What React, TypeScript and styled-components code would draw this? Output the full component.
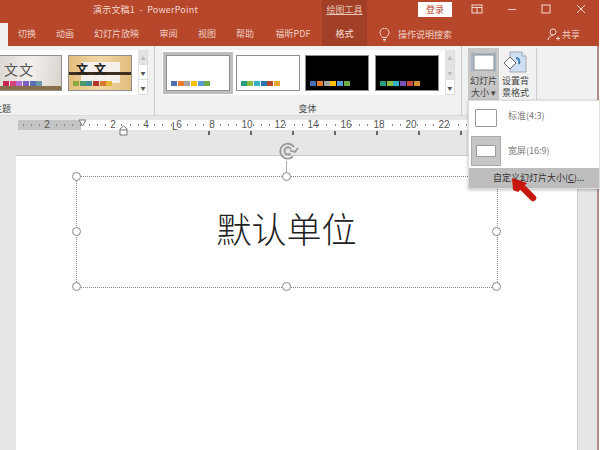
import React from "react";
import styled, { createGlobalStyle } from "styled-components";

const Global = createGlobalStyle`
  html, body { margin: 0; padding: 0; width: 600px; height: 450px; overflow: hidden; background: #e6e6e6; }
  * { box-sizing: border-box; }
`;
const FONT = `"Noto Sans CJK SC", "Liberation Sans", sans-serif`;

const Page = styled.div`
  position: relative; width: 600px; height: 450px; overflow: hidden;
  font-family: ${FONT}; background: #e6e6e6; color: #444;
`;
const TitleBar = styled.div`
  display: flex; align-items: flex-start; height: 23px; padding-left: 93px; background: #b7472a; color: #f3d9d0; font-size: 9px;
`;
const TitleText = styled.span`
  flex: none; width: 229px; padding-top: 2px; line-height: 16px; white-space: pre; letter-spacing: 0.2px;
`;
const ToolContext = styled.div`
  flex: none; width: 45px; height: 23px; background: #a23f27;
  text-align: center; line-height: 19px; font-size: 9px; color: #eac6ba; text-decoration: underline;
`;
const Login = styled.div`
  flex: none; margin: 2px 19px 0 51px; width: 34px; height: 15px; background: #fff; color: #b7472a;
  font-size: 9px; line-height: 15px; text-align: center;
`;
const WinControls = styled.div`display: flex; gap: 22.6px; padding-top: 3px;`;
const WinIcon = styled.svg`
  flex: none; width: 12px; height: 12px; fill: none; stroke: #f3d9d0; stroke-width: 1;
`;
const TabBar = styled.div`
  display: flex; align-items: center; height: 23px; background: #b7472a; color: #f0d0c6; font-size: 9px;
`;
const HomeStub = styled.div`width: 8px; height: 23px; background: #f1f1f1; flex: none;`;
const Tab = styled.div<{ $w: number; $active?: boolean }>`
  width: ${p => p.$w}px; height: 23px; line-height: 21px; text-align: center; flex: none;
  background: ${p => (p.$active ? "#a23f27" : "transparent")};
  color: ${p => (p.$active ? "#f7e3dc" : "#f0d0c6")};
`;
const Search = styled.div`
  display: flex; align-items: center; gap: 8px; margin-left: 12px; width: 168px; flex: none;
`;
const Share = styled.div`display: flex; align-items: center; gap: 2px; flex: none;`;
const Ribbon = styled.div`
  display: flex; height: 70px; background: #f1f1f1; border-bottom: 1px solid #dadada; font-size: 9px;
`;
const GroupA = styled.div`
  flex: none; width: 155px; height: 70px; display: flex; flex-direction: column; border-right: 1px solid #c9c9c9;
  margin-right: 7px; padding-top: 4px;
`;
const Gallery = styled.div`
  display: flex; align-items: center; gap: 6px; background: #fff; height: 45px; width: 147px; flex: none;
`;
const Swatches = styled.div<{ $l: number }>`
  display: flex; margin: auto 0 4px ${p => p.$l}px; position: relative;
`;
const Chip = styled.i<{ $c: string }>`display: block; width: 6px; height: 5px; margin-right: 0.7px; background: ${p => p.$c};`;
const Thumb = styled.div<{ $bg: string; $sel?: boolean }>`
  position: relative; flex: none; display: flex; flex-direction: column; width: 64px; height: 36px;
  border: 1px solid #8f8f8f; background: ${p => p.$bg};
  outline: ${p => (p.$sel ? "3px solid #bdbdbd" : "none")};
`;
const ThemeCrop = styled(Thumb)`width: 62px; border-left: none;`;
const ThemeLabel = styled.div`margin: 7px 0 0 -7px; line-height: 13px; color: #444; font-size: 9px; white-space: nowrap;`;
const Spin = styled.div`
  margin-left: auto; flex: none; width: 10px; height: 45px; display: flex; flex-direction: column;
  background: #fff; border-left: 1px solid #e2e2e2;
`;
const SpinBtn = styled.div<{ $dis?: boolean }>`
  flex: 1; display: flex; align-items: center; justify-content: center; font-size: 5px; line-height: 1;
  background: ${p => (p.$dis ? "#e3e3e3" : "#fff")}; color: ${p => (p.$dis ? "#bbb" : "#555")};
  border-bottom: 1px solid #ddd; border-right: 1px solid #ddd;
`;
const GroupB = styled.div`
  flex: none; width: 300px; height: 70px; display: flex; flex-direction: column; border-right: 1px solid #c9c9c9; margin-right: 6px; padding-top: 4px;
`;
const VariantRow = styled.div`
  display: flex; align-items: center; gap: 5.7px; background: #fff; height: 45px; width: 291px; padding-left: 4px; flex: none;
`;
const GroupLabel = styled.div`margin-top: 7px; padding-right: 8px; text-align: center; line-height: 13px; color: #444; font-size: 9px;`;
const BigBtn = styled.div<{ $on?: boolean }>`
  flex: none; width: 31px; height: 55px; margin-top: 2px; padding-top: 3px; display: flex; flex-direction: column; align-items: center;
  background: ${p => (p.$on ? "#c6c6c6" : "transparent")}; font-size: 9px; line-height: 12px; color: #444; text-align: center;
`;
const BgBtn = styled(BigBtn)`margin-left: 1px; margin-right: 5px;`;
const SizeLabel = styled.span`margin-top: 2px;`;
const BgLabel = styled.span`margin-top: 2px;`;
const RibbonEnd = styled.div`flex: none; width: 1px; height: 52px; margin-top: 2px; background: #cdcdcd;`;
const RulerBand = styled.div`
  height: 38px; background: #e6e6e6; padding: 4px 0 0 18px; flex: none;
`;
const Ruler = styled.div`
  position: relative; width: 490px; height: 10px; background: #fff;
`;
const RulerGrey = styled.div`position: absolute; left: 0; top: 0; width: 63px; height: 10px; background: #c4c4c4;`;
const RulerNum = styled.span<{ $x: number }>`
  position: absolute; left: ${p => p.$x}px; top: 0; width: 14px; margin-left: -7px; text-align: center;
  font: 10px/10px "Liberation Sans", sans-serif; color: #555;
`;
const RulerTick = styled.span<{ $x: number }>`
  position: absolute; left: ${p => p.$x}px; top: 4px; width: 1px; height: 2px; background: #888;
`;
const MajorRow = styled.div`display: flex; gap: 40px; margin-top: 1px; padding-left: 190px;`;
const MajorTick = styled.span`flex: none; width: 2px; height: 4px; background: #666;`;
const IndentTop = styled.svg`position: absolute; left: 60px; top: -1px;`;
const IndentBottom = styled.svg`position: absolute; left: 101px; top: 5px;`;
const TabStop = styled.span`position: absolute; left: 154px; top: 2px; font: 10px/10px "Liberation Sans", sans-serif; color: #444;`;
const Workspace = styled.div`
  height: 296px; padding: 1px 22px 0 16px; background: #e6e6e6;
`;
const Slide = styled.div`
  position: relative; width: 562px; height: 295px; background: #fff; border-top: 1px solid #c9c9c9; border-right: 1px solid #c9c9c9;
`;
const TextBox = styled.div`
  position: absolute; left: 60px; top: 20px; width: 422px; height: 112px; border: 1px dotted #8a8a8a;
  display: flex; align-items: center; justify-content: center; font-size: 35px; color: #222; padding: 0 1px 9px 0;
  font-family: "Noto Sans CJK SC", sans-serif; font-weight: 300;
`;
const Handle = styled.span<{ $x: string; $y: string }>`
  position: absolute; left: ${p => p.$x}; top: ${p => p.$y}; width: 9px; height: 9px; margin: -5px 0 0 -5px;
  border-radius: 50%; background: #fff; border: 1.3px solid #8a8a8a;
`;
const RotateStem = styled.span`position: absolute; left: 50%; top: -16px; width: 1px; height: 16px; background: #aaa; margin-left: -1px;`;
const RotateIcon = styled.svg`position: absolute; left: 202px; top: -35px; width: 20px; height: 18px;`;
const Menu = styled.div`
  position: absolute; left: 468px; top: 100px; width: 132px; height: 89px; background: #fff; border: 1px solid #dcdcdc;
  box-shadow: 0 1px 3px rgba(0,0,0,.25); font-size: 9px; color: #777; z-index: 5;
`;
const MenuRow = styled.div<{ $h: number }>`display: flex; align-items: flex-start; height: ${p => p.$h}px; padding-left: 2px; gap: 7px;`;
const MenuIconBox = styled.div<{ $on?: boolean }>`
  flex: none; width: 30px; height: 30px; margin-top: ${p => (p.$on ? 0 : 2)}px; display: flex; align-items: center; justify-content: center;
  background: ${p => (p.$on ? "#c6c6c6" : "transparent")}; border: ${p => (p.$on ? "1px solid #aaa" : "none")};
`;
const MenuLabel = styled.span`line-height: 30px;`;
const MenuSlide = styled.div`width: 22px; height: 18px; background: #fff; border: 1px solid #999; border-radius: 1px;`;
const MenuSlideWide = styled.div`width: 20px; height: 12px; background: #fff; border: 1px solid #999; border-radius: 1px;`;
const MenuCustom = styled.div`
  height: 20px; background: #bdbdbd; line-height: 19px; padding-left: 24px; color: #333; white-space: nowrap; font-size: 9px;
`;
const Underlined = styled.span`text-decoration: underline;`;
const Arrow = styled.svg`position: absolute; left: 510px; top: 176px; width: 28px; height: 28px; z-index: 6;`;
const EdgeLine = styled.div`position: absolute; left: 597px; top: 46px; bottom: 0; width: 2px; background: #ab8f88;`;
const EdgeWhite = styled.div`position: absolute; left: 599px; top: 0; bottom: 0; width: 1px; background: #fff;`;
const Glyph = styled.span`
  position: absolute; font-family: "Noto Sans CJK SC", serif; color: #333; line-height: 1;
`;
const ThemeGlyphA = styled(Glyph)`left: 4px; top: 6px; font-size: 14px; letter-spacing: 1px; color: #555;`;
const ThemeGlyphB = styled(Glyph)`left: 7px; top: 7px; font-size: 12px; letter-spacing: 6px; color: #222; font-weight: 700;`;
const ThemeCard = styled.div`position: absolute; left: 12px; top: 6px; width: 39px; height: 21px; background: #f5f1ea;`;
const ThemeBandDark = styled.div`position: absolute; left: 0; right: 0; top: 16px; height: 3px; background: #3f2f20;`;
const ThemeFloor = styled.div`position: absolute; left: 0; right: 0; bottom: 0; height: 4px; background: #8a6d4a;`;

const strip = (colors: string[], l: number) => (
  <Swatches $l={l}>{colors.map((c, i) => <Chip key={i} $c={c} />)}</Swatches>
);
const V1 = ["#4a6fb5", "#ed7d31", "#a5a5a5", "#ffc000", "#5b9bd5", "#70ad47"];
const V2 = ["#2a9d7f", "#8bbd3f", "#35b3c4", "#2a72b0", "#b5482a", "#eba52f"];
const V4 = ["#2a9d7f", "#8bbd3f", "#35b3c4", "#7a4fb5", "#c9483a", "#d9902f"];

const tabs: [string, number][] = [["切换", 38], ["动画", 38], ["幻灯片放映", 65], ["审阅", 39], ["视图", 38], ["帮助", 38], ["福昕PDF", 58]];
const nums: [number, string][] = [[29, "2"], [95, "2"], [128, "4"], [161, "6"], [194, "8"], [229, "10"], [262, "12"], [295, "14"], [328, "16"], [361, "18"], [393, "20"], [426, "22"]];
const ticks = Array.from({ length: 58 }, (_, i) => 5 + i * 8.2).filter(x => !nums.some(n => Math.abs(n[0] - x) < 5));
const majors = [0, 1, 2, 3, 4, 5, 6];

export default function App() {
  return (
    <Page>
      <Global />
      <TitleBar>
        <TitleText>{"演示文稿1  -  PowerPoint"}</TitleText>
        <ToolContext>绘图工具</ToolContext>
        <Login>登录</Login>
        <WinControls>
          <WinIcon viewBox="0 0 12 12"><rect x="1" y="2" width="10" height="8" /><path d="M1 4.500h10M6 4.500v5.500" /></WinIcon>
          <WinIcon viewBox="0 0 12 12"><path d="M2 6.500h8" /></WinIcon>
          <WinIcon viewBox="0 0 12 12"><rect x="2" y="2" width="8" height="8" /></WinIcon>
          <WinIcon viewBox="0 0 12 12"><path d="M2 2l8 8M10 2l-8 8" /></WinIcon>
        </WinControls>
      </TitleBar>
      <TabBar>
        <HomeStub />
        {tabs.map(([t, w]) => <Tab key={t} $w={w}>{t}</Tab>)}
        <Tab $w={45} $active>格式</Tab>
        <Search>
          <svg width="11" height="14" viewBox="0 0 11 14" fill="none" stroke="#f3d9d0" strokeWidth="1">
            <path d="M3.500 9.500C3 8 1 7 1 4.700a4.500 4.500 0 0 1 9 0C10 7 8 8 7.500 9.500zM4 11.500h3M4.500 13h2" />
          </svg>
          <span>操作说明搜索</span>
        </Search>
        <Share>
          <svg width="13" height="13" viewBox="0 0 13 13" fill="none" stroke="#f3d9d0" strokeWidth="1">
            <circle cx="6" cy="4" r="3" /><path d="M1 12c.5-3 2.500-4.500 5-4.500M9 10.500h4M11 8.500v4" />
          </svg>
          <span>共享</span>
        </Share>
      </TabBar>
      <Ribbon>
        <GroupA>
          <Gallery>
            <ThemeCrop $bg="linear-gradient(100deg,#dcd7d2,#f3efec 50%,#d8d2cc)">
              <ThemeGlyphA>文文</ThemeGlyphA>
              <ThemeFloor />
              {strip(["#c2254e", "#d9457a", "#b56bd6", "#7a5fc0", "#5b6fb5", "#6a9aa8"], 3)}
            </ThemeCrop>
            <Thumb $bg="linear-gradient(90deg,#e3bd7e,#f1d7a5 50%,#e3bd7e)">
              <ThemeCard />
              <ThemeBandDark />
              <ThemeGlyphB>文文</ThemeGlyphB>
              {strip(["#8aa83c", "#4a9a6a", "#3f8a96", "#b5342a", "#d9772f", "#e3b83f"], 4)}
            </Thumb>
            <Spin>
              <SpinBtn $dis>▲</SpinBtn>
              <SpinBtn>▼</SpinBtn>
              <SpinBtn>▼</SpinBtn>
            </Spin>
          </Gallery>
          <ThemeLabel>主题</ThemeLabel>
        </GroupA>
        <GroupB>
          <VariantRow>
            <Thumb $bg="#fff" $sel>{strip(V1, 4)}</Thumb>
            <Thumb $bg="#fff">{strip(V2, 4)}</Thumb>
            <Thumb $bg="#000">{strip(V1, 4)}</Thumb>
            <Thumb $bg="#000">{strip(V4, 4)}</Thumb>
            <Spin>
              <SpinBtn $dis>▲</SpinBtn>
              <SpinBtn $dis>▼</SpinBtn>
              <SpinBtn>▼</SpinBtn>
            </Spin>
          </VariantRow>
          <GroupLabel>变体</GroupLabel>
        </GroupB>
        <BigBtn $on>
          <svg width="25" height="22" viewBox="0 0 25 22" fill="none">
            <path d="M1 3h23" stroke="#8aa4bf" strokeWidth="1" />
            <path d="M1 1v20M24 1v20" stroke="#8aa4bf" strokeWidth="1" />
            <rect x="3" y="4" width="20" height="15" fill="#fff" stroke="#8a8a8a" />
          </svg>
          <SizeLabel>幻灯片<br />大小 ▾</SizeLabel>
        </BigBtn>
        <BgBtn>
          <svg width="25" height="22" viewBox="0 0 25 22" fill="none">
            <path d="M7 1h12l4 4v16H7z" fill="#cfe0f3" stroke="#9a9a9a" strokeWidth=".8" />
            <path d="M19 1v4h4" stroke="#9a9a9a" strokeWidth=".8" fill="#eef4fb" />
            <path d="M1 12l6-6 6 6-6 6z" fill="#fff" stroke="#666" strokeWidth="1" />
            <path d="M13 7c3 0 4 3 3 6" stroke="#3c7fb1" strokeWidth="2" />
          </svg>
          <BgLabel>设置背<br />景格式</BgLabel>
        </BgBtn>
        <RibbonEnd />
      </Ribbon>
      <RulerBand>
        <Ruler>
          <RulerGrey />
          {ticks.map(x => <RulerTick key={x} $x={x} />)}
          {nums.map(([x, n]) => <RulerNum key={x} $x={x}>{n}</RulerNum>)}
          <IndentTop width="9" height="8" viewBox="0 0 9 8"><path d="M1 1h7L4.500 7z" fill="#fff" stroke="#777" /></IndentTop>
          <IndentBottom width="9" height="11" viewBox="0 0 9 11"><path d="M1 4l3.500-3L8 4v6H1zM1 5h7" fill="#fff" stroke="#777" /></IndentBottom>
          <TabStop>L</TabStop>
        </Ruler>
        <MajorRow>{majors.map(x => <MajorTick key={x} />)}</MajorRow>
      </RulerBand>
      <Workspace>
        <Slide>
          <TextBox>
            默认单位
            <RotateStem />
            <RotateIcon viewBox="0 0 20 18" fill="none" stroke="#9a9a9a" strokeWidth="1.800">
              <path d="M14 14.500A7.500 7.500 0 1 1 15 5" />
              <path d="M11.500 11.500a3.600 3.600 0 1 1 .6-4.500" />
              <path d="M11 8.500l5 1.500 3-4" />
            </RotateIcon>
            <Handle $x="0" $y="0" /><Handle $x="50%" $y="0" /><Handle $x="100%" $y="0" />
            <Handle $x="0" $y="50%" /><Handle $x="100%" $y="50%" />
            <Handle $x="0" $y="100%" /><Handle $x="50%" $y="100%" /><Handle $x="100%" $y="100%" />
          </TextBox>
        </Slide>
      </Workspace>
      <EdgeLine />
      <EdgeWhite />
      <Menu>
        <MenuRow $h={35}><MenuIconBox><MenuSlide /></MenuIconBox><MenuLabel>标准(4:3)</MenuLabel></MenuRow>
        <MenuRow $h={32}><MenuIconBox $on><MenuSlideWide /></MenuIconBox><MenuLabel>宽屏(16:9)</MenuLabel></MenuRow>
        <MenuCustom>自定义幻灯片大小(<Underlined>C</Underlined>)...</MenuCustom>
      </Menu>
      <Arrow viewBox="0 0 28 28">
        <path d="M2 2l15 5-4 4-5 5-5-2z" fill="#c8170d" />
        <path d="M10 9l13 13" stroke="#c8170d" strokeWidth="6.500" strokeLinecap="round" />
      </Arrow>
    </Page>
  );
}
